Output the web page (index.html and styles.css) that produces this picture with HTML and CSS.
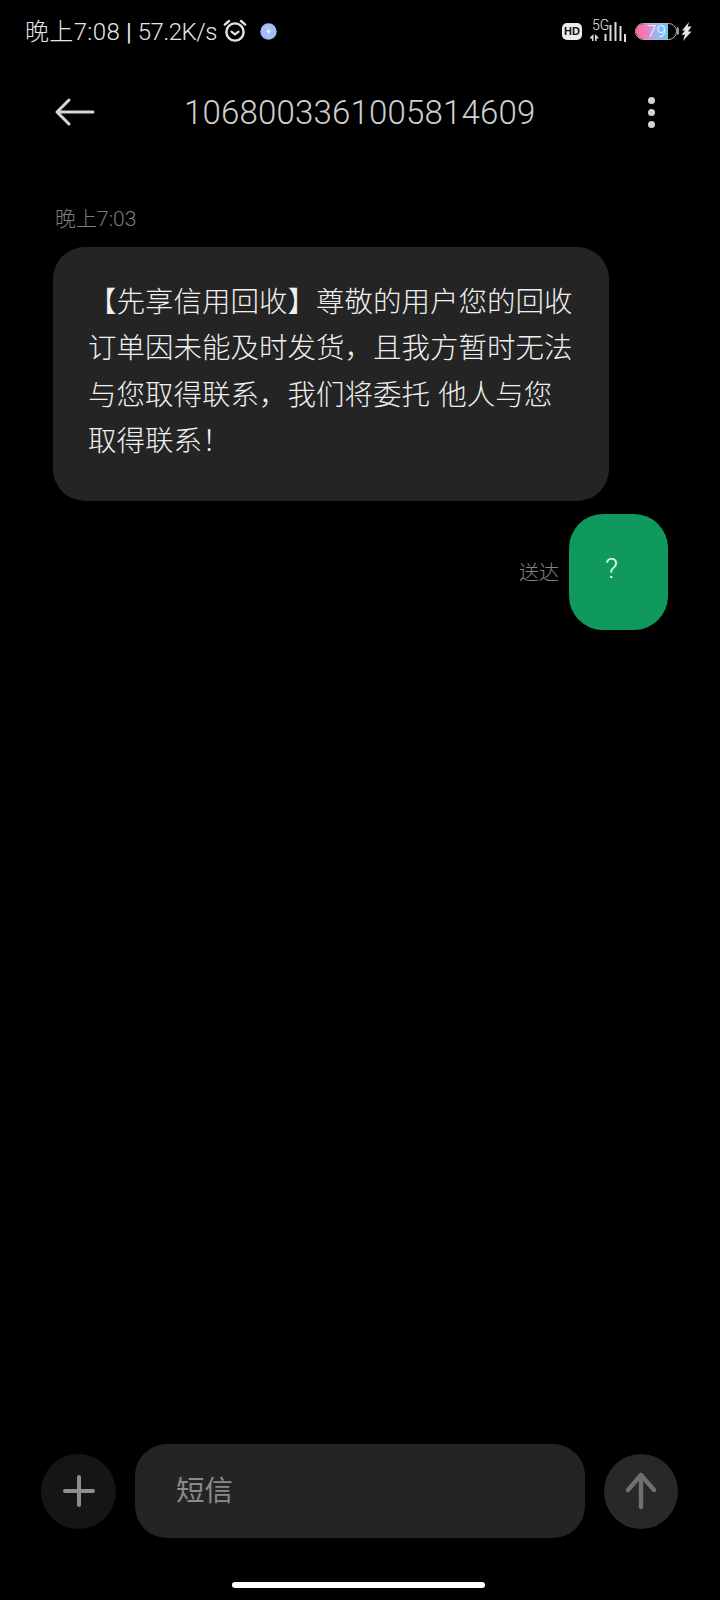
FILE: index.html
```html
<!DOCTYPE html>
<html lang="zh">
<head>
<meta charset="utf-8">
<title>短信</title>
<link rel="stylesheet" href="styles.css">
</head>
<body>
<div class="screen">
  <div class="status">
    <div class="status-left">
      <span class="status-text"><span class="clock">晚上7:08</span> <b class="sep">|</b> <span class="speed">57.2K/s</span></span>
      <svg class="alarm" width="24" height="24" viewBox="0 0 24 24" fill="none" stroke="#e4e4e4" stroke-linecap="round"><circle cx="12" cy="13" r="8.6" stroke-width="2.4"/><path d="M8.4 12.6l3.6 2.8 3.6-2.8" stroke-width="2"/><path d="M1.8 5.6L6 2M22.2 5.6L18 2" stroke-width="2.4"/></svg>
      <svg class="badge" width="17" height="17" viewBox="0 0 17 17"><circle cx="8.5" cy="8.5" r="8.2" fill="#a4bdf7"/><path d="M9.4 4.4L5.8 9.2h2.4l-.7 3.3 3.7-4.9H8.8z" fill="#e9efff"/></svg>
    </div>
    <div class="status-right">
      <span class="hd">HD</span>
      <span class="signal">
        <span class="fiveg">5G</span>
        <svg width="36" height="24" viewBox="0 0 36 24" fill="#dcdcdc"><path d="M0 18.500L3.500 15v7H2v-2.500H0zM5 15l3.500 3.500V19.500H6.500V22H5z"/><rect x="14.500" y="15" width="2" height="7"/><rect x="19.500" y="6" width="2" height="16"/><rect x="24.500" y="3" width="2" height="19"/><rect x="29.500" y="7" width="2" height="15"/><rect x="34" y="15" width="2" height="8"/></svg>
      </span>
      <span class="battery">
        <span class="battery-fill"></span>
        <span class="battery-num">79</span>
      </span>
      <span class="battery-cap"></span>
      <svg class="bolt" width="11" height="19" viewBox="0 0 11 19" fill="#e6e6e6"><path d="M8 0L1 8.500h3L.5 13l3.500-.5L2 19l8.500-9.500H7L10.500 4.500H6.800z"/></svg>
    </div>
  </div>

  <header class="topbar">
    <svg class="back" width="42" height="30" viewBox="0 0 42 30" fill="none" stroke="#d6d6d6" stroke-width="3" stroke-linecap="round" stroke-linejoin="round"><path d="M39 15H3M15 3L3 15l12 12"/></svg>
    <h1 class="number">1068003361005814609</h1>
    <div class="more"><i></i><i></i><i></i></div>
  </header>

  <main class="thread">
    <div class="timestamp">晚上7:03</div>
    <div class="bubble-in">【先享信用回收】尊敬的用户您的回收<br>订单因未能及时发货，且我方暂时无法<br>与您取得联系，我们将委托 他人与您<br>取得联系！</div>
    <div class="row-out">
      <span class="delivered">送达</span>
      <div class="bubble-out">?</div>
    </div>
  </main>

  <footer class="composer">
    <button class="round plus" aria-label="添加">
      <svg width="34" height="34" viewBox="0 0 34 34" stroke="#8e8e8e" stroke-width="4" stroke-linecap="round"><path d="M17 3v28M3 17h28"/></svg>
    </button>
    <div class="input">短信</div>
    <button class="round send" aria-label="发送">
      <svg width="32" height="38" viewBox="0 0 32 38" fill="none" stroke="#707070" stroke-width="4.400" stroke-linecap="round" stroke-linejoin="round"><path d="M16 35V3M3 18L16 3l13 15"/></svg>
    </button>
  </footer>

  <div class="home-wrap"><div class="home"></div></div>
</div>
</body>
</html>
```
FILE: styles.css
```css
* { box-sizing: border-box; }
html, body { margin: 0; padding: 0; background: #000; }
body { font-family: "Roboto", "Noto Sans CJK SC", sans-serif; }
.screen { width: 720px; height: 1600px; background: #000; display: flex; flex-direction: column; overflow: hidden; }

.status { height: 62px; flex: none; padding: 0 0 0 25px; display: flex; justify-content: space-between; align-items: center; color: #e6e6e6; }
.status-left { display: flex; align-items: center; }
.status-text { font-size: 24px; line-height: 62px; white-space: nowrap; font-weight: 300; position: relative; top: 1px; }
.clock { letter-spacing: 0.35px; }
.speed { letter-spacing: -0.45px; }
.sep { font-weight: 400; }
.alarm { margin-left: 6px; }
.badge { margin-left: 13px; }
.status-right { display: flex; align-items: center; padding-right: 28px; }
.hd { width: 20px; height: 17px; border-radius: 5px; background: #ececec; color: #111; font: 700 11px/17px "Liberation Sans", sans-serif; text-align: center; }
.signal { position: relative; margin-left: 8px; display: block; width: 36px; height: 24px; }
.signal svg { display: block; }
.fiveg { position: absolute; left: 2px; top: 0; font-size: 14px; line-height: 12px; font-weight: 300; color: #e6e6e6; }
.battery { position: relative; margin-left: 9px; width: 42px; height: 17px; border: 1.500px solid #b9b9b9; border-radius: 9px; background: #000; }
.battery-fill { position: absolute; left: 0; top: 0; bottom: 0; width: 32px; border-radius: 8px 0 0 8px; background: linear-gradient(90deg, #ff6c96 0%, #f27bb8 30%, #9fb0f5 62%, #5fcdf0 100%); }
.battery-num { position: absolute; left: 11px; top: 0; font-size: 17px; line-height: 14px; color: #f2f2ff; font-weight: 300; }
.battery-cap { width: 2px; height: 8px; background: #999; border-radius: 0 2px 2px 0; }
.bolt { margin-left: 2px; }

.topbar { height: 102px; flex: none; display: flex; align-items: center; padding: 2px 0 0 54px; position: relative; margin-top: -2px; }
.back { flex: none; }
.number { margin: 2px 0 0 88px; font-size: 33px; line-height: 40px; font-weight: 300; color: #d0d0d0; letter-spacing: 0.2px; white-space: nowrap; }
.more { display: flex; flex-direction: column; gap: 5px; margin-left: 112px; }
.more i { display: block; width: 7px; height: 7px; border-radius: 50%; background: #d4d4d4; }

.thread { flex: 1; padding: 43px 0 0 53px; display: flex; flex-direction: column; }
.timestamp { margin-left: 2px; font-size: 21px; line-height: 28px; color: #7c7c7c; font-weight: 300; height: 42px; }
.bubble-in { width: 556px; height: 254px; border-radius: 32px; background: #242424; color: #f0f0f0; padding: 30px 0 0 35px; font-family: "Noto Sans CJK SC", sans-serif; font-weight: 300; font-size: 28.500px; line-height: 46.300px; word-spacing: 2px; white-space: nowrap; }
.row-out { display: flex; align-items: center; margin-top: 13px; padding-left: 466px; }
.delivered { font-family: "Noto Sans CJK SC", sans-serif; font-weight: 300; font-size: 20px; line-height: 28px; color: #858585; width: 50px; }
.bubble-out { width: 99px; height: 116px; border-radius: 34px; background: #10995c; color: #edf7f0; font-size: 28.500px; line-height: 32px; padding: 39px 0 0 36px; font-weight: 300; }

.composer { flex: none; display: flex; align-items: center; padding: 0 0 0 41px; height: 94px; }
.round { width: 75px; height: 75px; border-radius: 50%; border: 0; padding: 0; display: flex; align-items: center; justify-content: center; flex: none; }
.plus { background: #151515; }
.send { background: #282828; margin-left: 19px; width: 74px; }
.input { width: 450px; height: 94px; margin-left: 19px; border-radius: 32px; background: #242424; color: #8a8a8a; font-family: "Noto Sans CJK SC", sans-serif; font-size: 28.500px; line-height: 90px; padding-left: 41px; font-weight: 400; }

.home-wrap { flex: none; height: 62px; padding-top: 44px; display: flex; justify-content: flex-start; padding-left: 232px; }
.home { width: 253px; height: 6px; border-radius: 3px; background: #fff; }
```
